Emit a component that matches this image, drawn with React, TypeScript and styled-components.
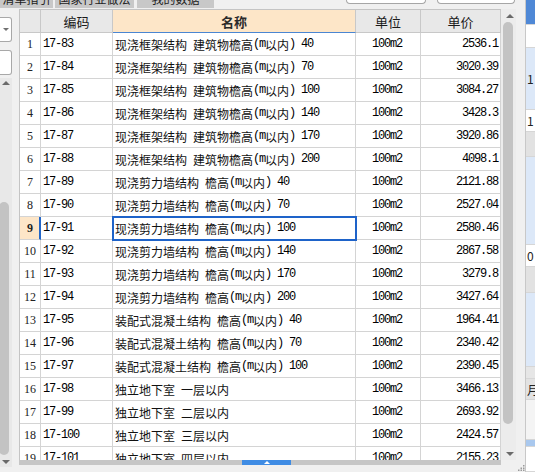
import React from "react";
import styled, { createGlobalStyle } from "styled-components";

const Global = createGlobalStyle`
  html, body { margin: 0; padding: 0; background: #f0f0f0; }
  body { font-family: "Noto Sans CJK SC", sans-serif; color: #111; }
`;

const CJK = `"Noto Sans CJK SC", sans-serif`;
const MONO = `"Liberation Mono", "DejaVu Sans Mono", monospace`;

const Page = styled.div`
  width: 535px;
  height: 472px;
  display: flex;
  overflow: hidden;
  background: #f0f0f0;
`;

const MainColumn = styled.div`
  width: 525px;
  display: flex;
  flex-direction: column;
`;

const TopBar = styled.div`
  height: 9px;
  display: flex;
  align-items: flex-start;
`;

const Tab = styled.div<{ $w: number; $gap: number }>`
  width: ${(p) => p.$w}px;
  margin-right: ${(p) => p.$gap}px;
  height: 8px;
  background: #c8c8c8;
  overflow: hidden;
  display: flex;
  justify-content: center;
  align-items: flex-end;
  font-family: ${CJK};
  font-size: 12px;
  color: #222;
`;

const TabLabel = styled.span`
  display: block;
  line-height: 14px;
  padding-bottom: 2px;
  white-space: nowrap;
`;

const SearchBox = styled.div<{ $w: number; $ml: number }>`
  width: ${(p) => p.$w}px;
  margin-left: ${(p) => p.$ml}px;
  height: 4px;
  background: #fff;
  border: 1px solid #a6a6a6;
  border-top: none;
  border-radius: 0 0 4px 4px;
  box-sizing: border-box;
`;

const Workspace = styled.div`
  flex: 1;
  display: flex;
  min-height: 0;
`;

const LeftPane = styled.div`
  width: 12px;
  margin-right: 7px;
  display: flex;
  flex-direction: column;
`;

const ComboBox = styled.div`
  height: 25px;
  margin-top: 8px;
  background: #fff;
  border: 1px solid #a8a8a8;
  border-left: none;
  border-radius: 0 3px 3px 0;
  box-sizing: border-box;
  display: flex;
  align-items: center;
  padding-left: 3px;
`;

const DownTri = styled.span<{ $c?: string }>`
  width: 0;
  height: 0;
  border-left: 3px solid transparent;
  border-right: 3px solid transparent;
  border-top: 3px solid ${(p) => p.$c || "#707070"};
`;

const UpTri = styled.span<{ $c?: string; $s?: number }>`
  width: 0;
  height: 0;
  border-left: ${(p) => p.$s || 4}px solid transparent;
  border-right: ${(p) => p.$s || 4}px solid transparent;
  border-bottom: ${(p) => p.$s || 4}px solid ${(p) => p.$c || "#6a6a6a"};
`;

const BigDownTri = styled.span`
  width: 0;
  height: 0;
  border-left: 4px solid transparent;
  border-right: 4px solid transparent;
  border-top: 4px solid #6a6a6a;
`;

const LeftScroll = styled.div`
  flex: 1;
  margin-top: 3px;
  margin-bottom: 5px;
  background: #e8e8e8;
  display: flex;
  flex-direction: column;
`;

const ArrowCell = styled.div<{ $h: number }>`
  height: ${(p) => p.$h}px;
  display: flex;
  align-items: center;
  justify-content: center;
  flex-shrink: 0;
`;

const LeftTrack = styled.div`
  flex: 1;
  display: flex;
  flex-direction: column;
  padding-top: 114px;
  padding-bottom: 2px;
`;

const LeftThumb = styled.div`
  flex: 1;
  width: 10px;
  margin-left: -1px;
  background: #c3c3c3;
  border-radius: 5px;
`;

const GridFrame = styled.div`
  width: 498px;
  display: flex;
  flex-direction: column;
`;

const GridBody = styled.div`
  height: 451px;
  display: flex;
`;

const Table = styled.div`
  width: 482px;
  height: 451px;
  overflow: hidden;
  background: #fff;
  border-left: 1px solid #c4c4c4;
  border-top: 1px solid #c4c4c4;
  box-sizing: border-box;
`;

const Row = styled.div`
  display: grid;
  grid-template-columns: 21px 72px 243px 65px 80px;
  height: 23px;
`;

const HeadCell = styled.div<{ $active?: boolean }>`
  box-sizing: border-box;
  border-right: 1px solid #c8c8c8;
  border-bottom: 1px solid ${(p) => (p.$active ? "#4a86d2" : "#c8c8c8")};
  background: ${(p) => (p.$active ? "#fde6c8" : "#e8e8e8")};
  display: flex;
  align-items: center;
  justify-content: center;
  font-family: ${CJK};
  font-size: 13px;
  font-weight: ${(p) => (p.$active ? 700 : 400)};
  color: ${(p) => (p.$active ? "#2a2a2a" : "#1a1a1a")};
`;

const NumCell = styled.div<{ $active?: boolean }>`
  box-sizing: border-box;
  border-right: ${(p) => (p.$active ? "2px solid #2266c8" : "1px solid #d4d4d4")};
  border-bottom: 1px solid #d4d4d4;
  background: ${(p) => (p.$active ? "#fde6c8" : "#fff")};
  display: flex;
  align-items: center;
  justify-content: center;
  padding-left: ${(p) => (p.$active ? 1 : 0)}px;
  font-family: "Liberation Serif", serif;
  font-size: 12px;
  font-weight: ${(p) => (p.$active ? 700 : 400)};
  color: #222;
`;

const Cell = styled.div<{ $align?: "left" | "center" | "right"; $selected?: boolean }>`
  position: relative;
  box-sizing: border-box;
  border-right: 1px solid #d4d4d4;
  border-bottom: 1px solid #d4d4d4;
  display: flex;
  align-items: center;
  justify-content: ${(p) =>
    p.$align === "right" ? "flex-end" : p.$align === "center" ? "center" : "flex-start"};
  padding: 0 2px 0 ${(p) => (p.$align === "left" ? 2 : 0)}px;
  font-family: ${CJK};
  font-size: 12px;
  white-space: pre;
  overflow: ${(p) => (p.$selected ? "visible" : "hidden")};
  color: #111;
  ${(p) =>
    p.$selected
      ? `outline: 2px solid #1e63c9; outline-offset: -1px; z-index: 2;`
      : ""}
`;

const Latin = styled.span`
  font-family: ${MONO};
  font-size: 12px;
  letter-spacing: -1.2px;
  white-space: pre;
  color: #000;
`;

const VScroll = styled.div`
  width: 15px;
  height: 451px;
  background: #ececec;
  display: flex;
  flex-direction: column;
  padding-left: 2px;
  box-sizing: border-box;
`;

const VThumb = styled.div`
  width: 10px;
  height: 402px;
  background: #c3c3c3;
  border-radius: 5px;
  flex-shrink: 0;
`;

const Filler = styled.div`
  flex: 1;
`;

const BottomRow = styled.div`
  height: 5px;
  display: flex;
`;

const HScroll = styled.div`
  width: 482px;
  background: #c6c6c6;
  display: flex;
  padding-left: 223px;
  box-sizing: border-box;
`;

const HThumb = styled.div`
  width: 49px;
  background: #3f8ce4;
  display: flex;
  align-items: center;
  justify-content: center;
`;

const SideGap = styled.div`
  width: 8px;
  display: flex;
  flex-direction: column;
  justify-content: flex-end;
  align-items: flex-end;
  padding-bottom: 1px;
  box-sizing: border-box;
`;

const RightPanel = styled.div`
  width: 10px;
  display: flex;
  flex-direction: column;
  border-left: 1px solid #c8c8c8;
  box-sizing: border-box;
  overflow: hidden;
`;

const Block = styled.div<{ $h: number; $bg: string }>`
  height: ${(p) => p.$h}px;
  flex-shrink: 0;
  background: ${(p) => p.$bg};
  border-bottom: 1px solid #d6d6d6;
  box-sizing: border-box;
  display: flex;
  align-items: center;
  font-family: ${CJK};
  font-size: 12px;
  color: #222;
  padding-left: 1px;
  white-space: nowrap;
`;

const rows: [string, string, string][] = [
  ["17-83", "现浇框架结构 建筑物檐高(m以内) 40", "2536.1"],
  ["17-84", "现浇框架结构 建筑物檐高(m以内) 70", "3020.39"],
  ["17-85", "现浇框架结构 建筑物檐高(m以内) 100", "3084.27"],
  ["17-86", "现浇框架结构 建筑物檐高(m以内) 140", "3428.3"],
  ["17-87", "现浇框架结构 建筑物檐高(m以内) 170", "3920.86"],
  ["17-88", "现浇框架结构 建筑物檐高(m以内) 200", "4098.1"],
  ["17-89", "现浇剪力墙结构 檐高(m以内) 40", "2121.88"],
  ["17-90", "现浇剪力墙结构 檐高(m以内) 70", "2527.04"],
  ["17-91", "现浇剪力墙结构 檐高(m以内) 100", "2580.46"],
  ["17-92", "现浇剪力墙结构 檐高(m以内) 140", "2867.58"],
  ["17-93", "现浇剪力墙结构 檐高(m以内) 170", "3279.8"],
  ["17-94", "现浇剪力墙结构 檐高(m以内) 200", "3427.64"],
  ["17-95", "装配式混凝土结构 檐高(m以内) 40", "1964.41"],
  ["17-96", "装配式混凝土结构 檐高(m以内) 70", "2340.42"],
  ["17-97", "装配式混凝土结构 檐高(m以内) 100", "2390.45"],
  ["17-98", "独立地下室 一层以内", "3466.13"],
  ["17-99", "独立地下室 二层以内", "2693.92"],
  ["17-100", "独立地下室 三层以内", "2424.57"],
  ["17-101", "独立地下室 四层以内", "2155.23"],
];

const Mixed: React.FC<{ text: string }> = ({ text }) => (
  <>
    {text.split(/([\x20-\x7e]+)/).map((part, i) =>
      part === "" ? null : /^[\x20-\x7e]+$/.test(part) ? (
        <Latin key={i}>{part}</Latin>
      ) : (
        <React.Fragment key={i}>{part}</React.Fragment>
      )
    )}
  </>
);

const Grip = () => (
  <svg width="7" height="6" viewBox="0 0 7 6">
    <rect x="5" y="0" width="1.5" height="1.5" fill="#9a9a9a" />
    <rect x="2.5" y="2.5" width="1.5" height="1.5" fill="#9a9a9a" />
    <rect x="5" y="2.5" width="1.5" height="1.5" fill="#9a9a9a" />
    <rect x="0" y="4.5" width="1.5" height="1.5" fill="#9a9a9a" />
    <rect x="2.5" y="4.5" width="1.5" height="1.5" fill="#9a9a9a" />
    <rect x="5" y="4.5" width="1.5" height="1.5" fill="#9a9a9a" />
  </svg>
);

const SELECTED_ROW = 8;

export default function App() {
  return (
    <>
      <Global />
      <Page>
        <MainColumn>
          <TopBar>
            <Tab $w={53} $gap={2}>
              <TabLabel>清单指引</TabLabel>
            </Tab>
            <Tab $w={79} $gap={3}>
              <TabLabel>国家行业做法</TabLabel>
            </Tab>
            <Tab $w={77} $gap={0}>
              <TabLabel>我的数据</TabLabel>
            </Tab>
            <SearchBox $w={80} $ml={132} />
            <SearchBox $w={78} $ml={11} />
          </TopBar>
          <Workspace>
            <LeftPane>
              <ComboBox>
                <DownTri />
              </ComboBox>
              <ComboBox />
              <LeftScroll>
                <ArrowCell $h={10}>
                  <UpTri $s={4} />
                </ArrowCell>
                <LeftTrack>
                  <LeftThumb />
                </LeftTrack>
                <ArrowCell $h={10}>
                  <BigDownTri />
                </ArrowCell>
              </LeftScroll>
            </LeftPane>
            <GridFrame>
              <GridBody>
                <Table>
                  <Row>
                    <HeadCell />
                    <HeadCell>编码</HeadCell>
                    <HeadCell $active>名称</HeadCell>
                    <HeadCell>单位</HeadCell>
                    <HeadCell>单价</HeadCell>
                  </Row>
                  {rows.map(([code, name, price], i) => (
                    <Row key={code}>
                      <NumCell $active={i === SELECTED_ROW}>{i + 1}</NumCell>
                      <Cell $align="left">
                        <Latin>{code}</Latin>
                      </Cell>
                      <Cell $align="left" $selected={i === SELECTED_ROW}>
                        <Mixed text={name} />
                      </Cell>
                      <Cell $align="center">
                        <Latin>100m2</Latin>
                      </Cell>
                      <Cell $align="right">
                        <Latin>{price}</Latin>
                      </Cell>
                    </Row>
                  ))}
                </Table>
                <VScroll>
                  <ArrowCell $h={13}>
                    <UpTri $s={4} />
                  </ArrowCell>
                  <VThumb />
                  <Filler />
                  <ArrowCell $h={12}>
                    <BigDownTri />
                  </ArrowCell>
                </VScroll>
              </GridBody>
              <BottomRow>
                <HScroll>
                  <HThumb>
                    <UpTri $c="#ffffff" $s={3} />
                  </HThumb>
                </HScroll>
              </BottomRow>
            </GridFrame>
            <SideGap>
              <Grip />
            </SideGap>
          </Workspace>
        </MainColumn>
        <RightPanel>
          <Block $h={25} $bg="#4f88d6" />
          <Block $h={23} $bg="#ffffff" />
          <Block $h={62} $bg="#dce8f8">1</Block>
          <Block $h={22} $bg="#ffffff">1</Block>
          <Block $h={25} $bg="#e2e2e2" />
          <Block $h={88} $bg="#dce8f8" />
          <Block $h={22} $bg="#ffffff">0</Block>
          <Block $h={26} $bg="#e2e2e2" />
          <Block $h={74} $bg="#dce8f8" />
          <Block $h={12} $bg="#e6e6e6" />
          <Block $h={21} $bg="#e2e2e2">月</Block>
          <Block $h={40} $bg="#f4f4f4" />
          <Block $h={7} $bg="#a9c8ee" />
          <Block $h={25} $bg="#ffffff" />
        </RightPanel>
      </Page>
    </>
  );
}
